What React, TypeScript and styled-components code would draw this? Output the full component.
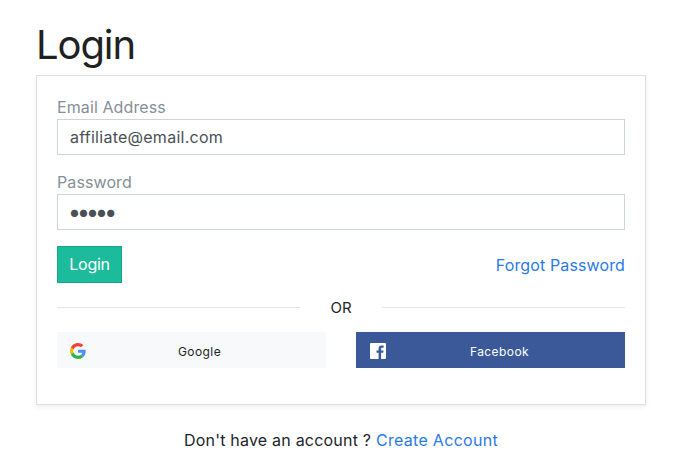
import React from "react";
import styled, { createGlobalStyle } from "styled-components";

const GlobalStyle = createGlobalStyle`
  *, *::before, *::after { box-sizing: border-box; }
  body {
    margin: 0;
    background: #fff;
    color: #212529;
    font-family: "Inter", sans-serif;
    font-size: 16px;
    line-height: 24px;
  }
`;

const Page = styled.main`
  width: 682px;
  height: 472px;
  padding: 21px 36px 0;
  overflow: hidden;
`;

const Title = styled.h1`
  margin: 0 0 6px;
  color: #212121;
  font-size: 40px;
  font-weight: 400;
  line-height: 48px;
  letter-spacing: -1.1px;
`;

const Card = styled.section`
  height: 330px;
  padding: 20px;
  border: 1px solid #dfdfdf;
  box-shadow: 0 2px 4px rgba(0, 0, 0, 0.075);
`;

const Field = styled.div`
  display: flex;
  flex-direction: column;
  margin-bottom: 16px;
`;

const Label = styled.label`
  height: 23px;
  line-height: 23px;
  color: #868e96;
  letter-spacing: 0.1px;
`;

const Input = styled.input`
  width: 100%;
  height: 36px;
  padding: 0 12px;
  border: 1px solid #ced4da;
  border-radius: 0;
  outline: none;
  background: #fff;
  color: #495057;
  font: inherit;
  letter-spacing: 0.26px;
`;

const PasswordInput = styled(Input)`
  padding: 0 10px 1px;
  font-size: 23px;
  letter-spacing: -3.9px;
`;

const Actions = styled.div`
  display: flex;
  align-items: center;
  justify-content: space-between;
`;

const LoginButton = styled.button`
  width: 65px;
  height: 37px;
  padding: 0 0 1px;
  border: 1px solid #18a689;
  background: #1cbb9b;
  color: #fff;
  font: inherit;
  letter-spacing: -0.3px;
  white-space: nowrap;
`;

const Link = styled.a<{ $tracking: number }>`
  color: #2a7ae4;
  text-decoration: none;
  letter-spacing: ${(p) => p.$tracking}px;
`;

const Divider = styled.div`
  display: grid;
  grid-template-columns: 243px 82px 243px;
  align-items: center;
  height: 24px;
  margin-top: 13px;
  font-size: 15px;
  text-align: center;
`;

const Rule = styled.span`
  height: 1px;
  margin-top: -1px;
  background: #e2e3e5;
`;

const Socials = styled.div`
  display: grid;
  grid-template-columns: 1fr 1fr;
  gap: 30px;
  margin-top: 12px;
`;

const SocialButton = styled.button<{ $bg: string; $fg: string }>`
  display: flex;
  align-items: center;
  height: 36px;
  padding: 2px 13px 0;
  border: 0;
  background: ${(p) => p.$bg};
  color: ${(p) => p.$fg};
  font: 12px/18px "Inter", sans-serif;
  letter-spacing: 0.42px;
`;

const SocialName = styled.span`
  flex: 1;
  padding: 1px 0 0;
  text-align: center;
`;

const Footer = styled.footer`
  margin-top: 23px;
  text-align: center;
  white-space: pre;
  letter-spacing: 0.21px;
`;

const GoogleIcon = () => (
  <svg width="16" height="16" viewBox="0 0 48 48" aria-hidden="true">
    <path fill="#F44336" d="M24 9.5c3.54 0 6.71 1.22 9.21 3.6l6.85-6.85C35.9 2.38 30.47 0 24 0 14.62 0 6.51 5.38 2.56 13.22l7.98 6.19C12.43 13.72 17.74 9.5 24 9.5z" />
    <path fill="#518EF8" d="M46.98 24.55c0-1.57-.15-3.09-.38-4.55H24v9.02h12.94c-.58 2.96-2.26 5.48-4.78 7.18l7.73 6c4.51-4.18 7.09-10.36 7.09-17.65z" />
    <path fill="#FBBB00" d="M10.53 28.59A14.5 14.5 0 0 1 9.77 24c0-1.6.27-3.14.76-4.59l-7.98-6.19A23.9 23.9 0 0 0 0 24c0 3.88.92 7.54 2.56 10.78l7.97-6.19z" />
    <path fill="#28B446" d="M24 48c6.48 0 11.93-2.13 15.89-5.81l-7.73-6c-2.15 1.45-4.92 2.3-8.16 2.3-6.26 0-11.57-4.22-13.47-9.91l-7.98 6.19C6.51 42.62 14.62 48 24 48z" />
  </svg>
);

const FacebookIcon = () => (
  <svg width="18" height="16" viewBox="-1 0 18 16" aria-hidden="true">
    <path fill="#fff" d="M.9 0H15.1c.5 0 .9.4.9.9v14.2c0 .5-.4.9-.9.9h-4V9.8h2.1l.3-2.4h-2.4V5.9c0-.7.2-1.2 1.2-1.2h1.3V2.6c-.2 0-1-.1-1.9-.1-1.9 0-3.1 1.1-3.1 3.2v1.7H6.5v2.4h2.1V16H.9c-.5 0-.9-.4-.9-.9V.9C0 .4.4 0 .9 0z" />
  </svg>
);

export default function App() {
  return (
    <>
      <GlobalStyle />
      <Page>
        <Title>Login</Title>
        <Card>
          <Field>
            <Label htmlFor="email">Email Address</Label>
            <Input id="email" type="email" defaultValue="affiliate@email.com" />
          </Field>
          <Field>
            <Label htmlFor="password">Password</Label>
            <PasswordInput id="password" type="password" defaultValue="login" />
          </Field>
          <Actions>
            <LoginButton type="button">Login</LoginButton>
            <Link href="#" $tracking={0.12}>Forgot Password</Link>
          </Actions>
          <Divider>
            <Rule />
            <span>OR</span>
            <Rule />
          </Divider>
          <Socials>
            <SocialButton type="button" $bg="#f8f9fa" $fg="#212529">
              <GoogleIcon />
              <SocialName>Google</SocialName>
            </SocialButton>
            <SocialButton type="button" $bg="#3b5998" $fg="#fff">
              <FacebookIcon />
              <SocialName>Facebook</SocialName>
            </SocialButton>
          </Socials>
        </Card>
        <Footer>
          Don't have an account ? <Link href="#" $tracking={0.3}>Create Account</Link>
        </Footer>
      </Page>
    </>
  );
}
